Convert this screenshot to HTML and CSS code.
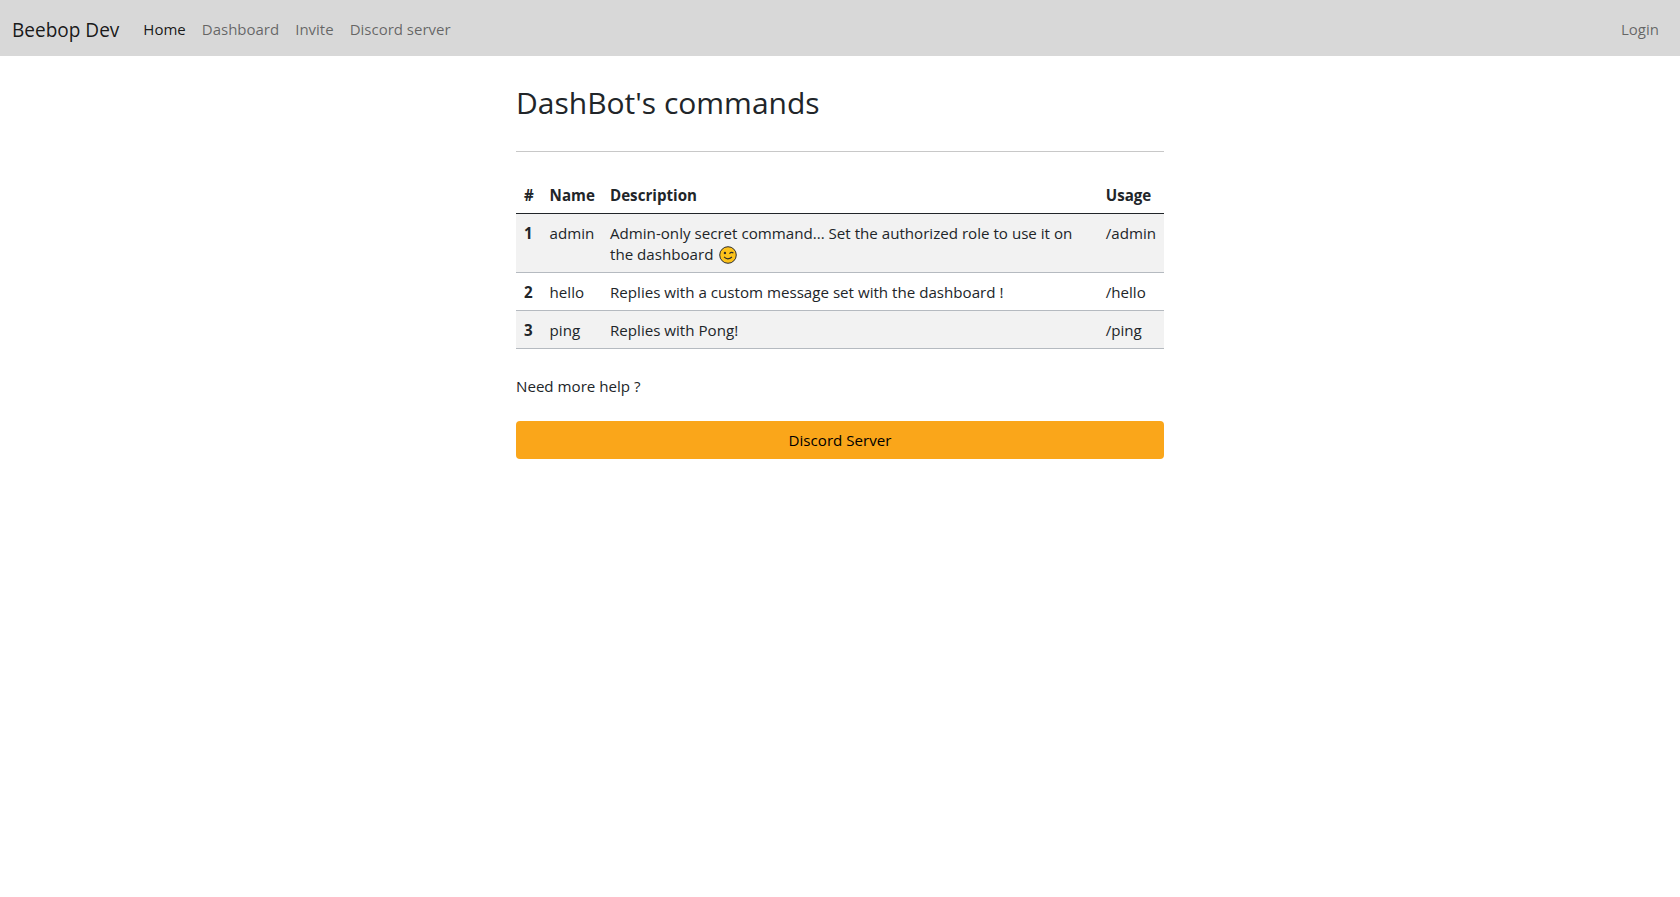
FILE: index.html
```html
<!DOCTYPE html>
<html lang="en">
<head>
<meta charset="utf-8">
<title>DashBot's commands</title>
<link rel="stylesheet" href="styles.css">
</head>
<body>
<nav class="navbar">
  <a class="brand" href="#">Beebop Dev</a>
  <ul class="nav-links">
    <li><a class="nav-link active" href="#">Home</a></li>
    <li><a class="nav-link" href="#">Dashboard</a></li>
    <li><a class="nav-link" href="#">Invite</a></li>
    <li><a class="nav-link" href="#">Discord server</a></li>
  </ul>
  <a class="nav-link login" href="#">Login</a>
</nav>
<main class="content">
  <h1 class="title">DashBot's commands</h1>
  <hr class="rule">
  <table class="commands">
    <colgroup>
      <col class="col-num">
      <col class="col-name">
      <col class="col-desc">
      <col class="col-usage">
    </colgroup>
    <thead>
      <tr><th>#</th><th>Name</th><th>Description</th><th>Usage</th></tr>
    </thead>
    <tbody>
      <tr class="odd">
        <th>1</th><td>admin</td>
        <td>Admin-only secret command... Set the authorized role to use it on the dashboard
          <svg class="emoji" viewBox="0 0 20 20" aria-hidden="true">
            <circle cx="10" cy="10" r="9.2" fill="#fcc21b" stroke="#2b2b2b" stroke-width="1.1"/>
            <circle cx="6.6" cy="7.8" r="1.3" fill="#2b2b2b"/>
            <path d="M11.6 8.4q2.2-2.2 4.4-.6" fill="none" stroke="#2b2b2b" stroke-width="1.2"/>
            <path d="M5.6 12.2q4 4.2 8.8 0" fill="none" stroke="#2b2b2b" stroke-width="1.2"/>
          </svg>
        </td>
        <td>/admin</td>
      </tr>
      <tr>
        <th>2</th><td>hello</td><td>Replies with a custom message set with the dashboard !</td><td>/hello</td>
      </tr>
      <tr class="odd">
        <th>3</th><td>ping</td><td>Replies with Pong!</td><td>/ping</td>
      </tr>
    </tbody>
  </table>
  <p class="help">Need more help ?</p>
  <a class="cta" href="#">Discord Server</a>
</main>
</body>
</html>
```
FILE: styles.css
```css
* { box-sizing: border-box; }
html, body { margin: 0; padding: 0; }
body {
  font-family: "Open Sans", "Noto Sans", sans-serif;
  font-size: 15.14px;
  line-height: 24px;
  color: #212529;
  background: #fff;
}
a { text-decoration: none; }
.navbar {
  display: flex;
  align-items: center;
  height: 56px;
  padding: 2px 12px 0;
  background: #d8d8d8;
}
.brand {
  font-size: 19.05px;
  line-height: 30px;
  color: rgba(0, 0, 0, .9);
  margin: 2px 16px 0 0;
}
.nav-links {
  display: flex;
  list-style: none;
  margin: 0;
  padding: 0;
  flex: 1;
}
.nav-link {
  display: block;
  padding: 8px;
  font-size: 15px;
  color: rgba(0, 0, 0, .55);
}
.nav-link.active { color: rgba(0, 0, 0, .9); }
.login { padding-right: 9px; }
.content {
  width: 648px;
  margin: 0 auto;
  padding-top: 25px;
}
.title {
  margin: 0;
  font-size: 30px;
  font-weight: 400;
  line-height: 43px;
}
.rule {
  margin: 27px 0 24px;
  border: 0;
  border-top: 1px solid #c8c8c8;
}
.commands {
  width: 100%;
  table-layout: fixed;
  border-collapse: collapse;
}
.col-num { width: 25.6px; }
.col-name { width: 60.4px; }
.col-usage { width: 66.3px; }
.commands th, .commands td {
  padding: 9px 8px 7px;
  text-align: left;
  vertical-align: top;
  line-height: 21px;
  border-bottom: 1px solid #b5bac0;
}
.commands thead th { border-bottom: 1px solid #212529; }
.odd th, .odd td { background: #f2f2f2; }
.emoji {
  width: 18px;
  height: 18px;
  vertical-align: -4px;
  margin-left: 2px;
}
.help { margin: 25px 0 23px; }
.cta {
  display: block;
  height: 38px;
  line-height: 38px;
  text-align: center;
  color: #000;
  background: #faa61a;
  border-radius: 4px;
}
```
